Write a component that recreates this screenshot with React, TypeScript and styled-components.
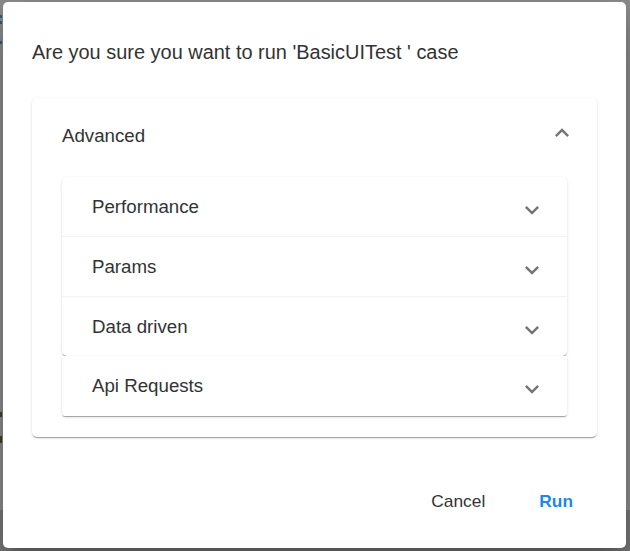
import React from "react";
import styled, { createGlobalStyle } from "styled-components";

const GlobalStyle = createGlobalStyle`
  html, body { margin: 0; padding: 0; }
  body { font-family: "Liberation Sans", Arial, sans-serif; background: #7b7b7b; }
  * { box-sizing: border-box; }
`;

const Backdrop = styled.div`
  position: relative;
  width: 630px;
  height: 551px;
  padding: 2px 4px 3px 3px;
  background: linear-gradient(to bottom, #8e8e8e 0, #8e8e8e 510px, #7a7a7a 510px);
  overflow: hidden;
`;

const PageMark = styled.span<{ $top: number; $h: number; $color: string }>`
  position: absolute;
  left: 0;
  top: ${(p) => p.$top}px;
  width: 2px;
  height: ${(p) => p.$h}px;
  background: ${(p) => p.$color};
`;

const Dialog = styled.div`
  position: relative;
  height: 100%;
  background: #ffffff;
  border-radius: 5px;
  box-shadow: 0 11px 15px -7px rgba(0, 0, 0, 0.2), 0 24px 38px 3px rgba(0, 0, 0, 0.14),
    0 9px 46px 8px rgba(0, 0, 0, 0.12);
  display: flex;
  flex-direction: column;
  padding: 34px 29px 27px 29px;
`;

const Title = styled.h2`
  margin: 0;
  font-weight: 400;
  font-size: 19.95px;
  line-height: 32px;
  color: #333333;
  white-space: pre;
`;

const Card = styled.div`
  margin-top: 30px;
  background: #fff;
  border-radius: 5px;
  box-shadow: 0 2px 1px -1px rgba(0, 0, 0, 0.2), 0 1px 1px 0 rgba(0, 0, 0, 0.14),
    0 1px 3px 0 rgba(0, 0, 0, 0.12);
`;

const Summary = styled.div<{ $height: number }>`
  display: flex;
  align-items: center;
  justify-content: space-between;
  height: ${(p) => p.$height}px;
  padding: 0 21px 0 30px;
  font-size: 18.7px;
  color: #333333;
`;

const Details = styled.div`
  padding: 4px 30px 21px 30px;
  display: flex;
  flex-direction: column;
`;

const Group = styled.div<{ $radius: string }>`
  background: #fff;
  border-radius: ${(p) => p.$radius};
  box-shadow: 0 2px 1px -1px rgba(0, 0, 0, 0.2), 0 1px 1px 0 rgba(0, 0, 0, 0.14),
    0 1px 3px 0 rgba(0, 0, 0, 0.12);
  display: flex;
  flex-direction: column;
`;

const Divider = styled.div`
  height: 1px;
  background: rgba(0, 0, 0, 0.05);
`;

const Footer = styled.div`
  margin-top: auto;
  display: flex;
  justify-content: flex-end;
  align-items: center;
  gap: 30px;
  height: 40px;
  padding-right: 12px;
`;

const TextButton = styled.button<{ $primary?: boolean }>`
  border: none;
  background: transparent;
  padding: 0 12px;
  height: 40px;
  font-family: "Liberation Sans", Arial, sans-serif;
  font-size: 17.35px;
  font-weight: ${(p) => (p.$primary ? 700 : 400)};
  color: ${(p) => (p.$primary ? "#1e88e5" : "#333333")};
  cursor: pointer;
`;

const ChevronSvg = styled.svg<{ $up?: boolean }>`
  width: 28px;
  height: 28px;
  fill: #757575;
  flex: none;
  margin-top: ${(p) => (p.$up ? "-5px" : "6px")};
  transform: ${(p) => (p.$up ? "rotate(180deg)" : "none")};
`;

const Chevron = ({ up }: { up?: boolean }) => (
  <ChevronSvg $up={up} viewBox="0 0 24 24">
    <path d="M16.59 8.59 12 13.17 7.41 8.59 6 10l6 6 6-6z" />
  </ChevronSvg>
);

const Row = ({ label, height }: { label: string; height: number }) => (
  <Summary $height={height}>
    <span>{label}</span>
    <Chevron />
  </Summary>
);

export default function App() {
  return (
    <>
      <GlobalStyle />
      <Backdrop>
        <PageMark $top={15} $h={3} $color="#2f5f8f" />
        <PageMark $top={21} $h={3} $color="#2f5f8f" />
        <PageMark $top={41} $h={3} $color="#2f5f8f" />
        <PageMark $top={412} $h={5} $color="#4a4030" />
        <PageMark $top={436} $h={7} $color="#4a4030" />
        <Dialog>
          <Title>Are you sure you want to run 'BasicUITest ' case</Title>
          <Card>
            <Summary $height={75}>
              <span>Advanced</span>
              <Chevron up />
            </Summary>
            <Details>
              <Group $radius="5px">
                <Row label="Performance" height={59} />
                <Divider />
                <Row label="Params" height={59} />
                <Divider />
                <Row label="Data driven" height={59} />
              </Group>
              <Group $radius="0 0 3px 3px">
                <Row label="Api Requests" height={60} />
              </Group>
            </Details>
          </Card>
          <Footer>
            <TextButton>Cancel</TextButton>
            <TextButton $primary>Run</TextButton>
          </Footer>
        </Dialog>
      </Backdrop>
    </>
  );
}
